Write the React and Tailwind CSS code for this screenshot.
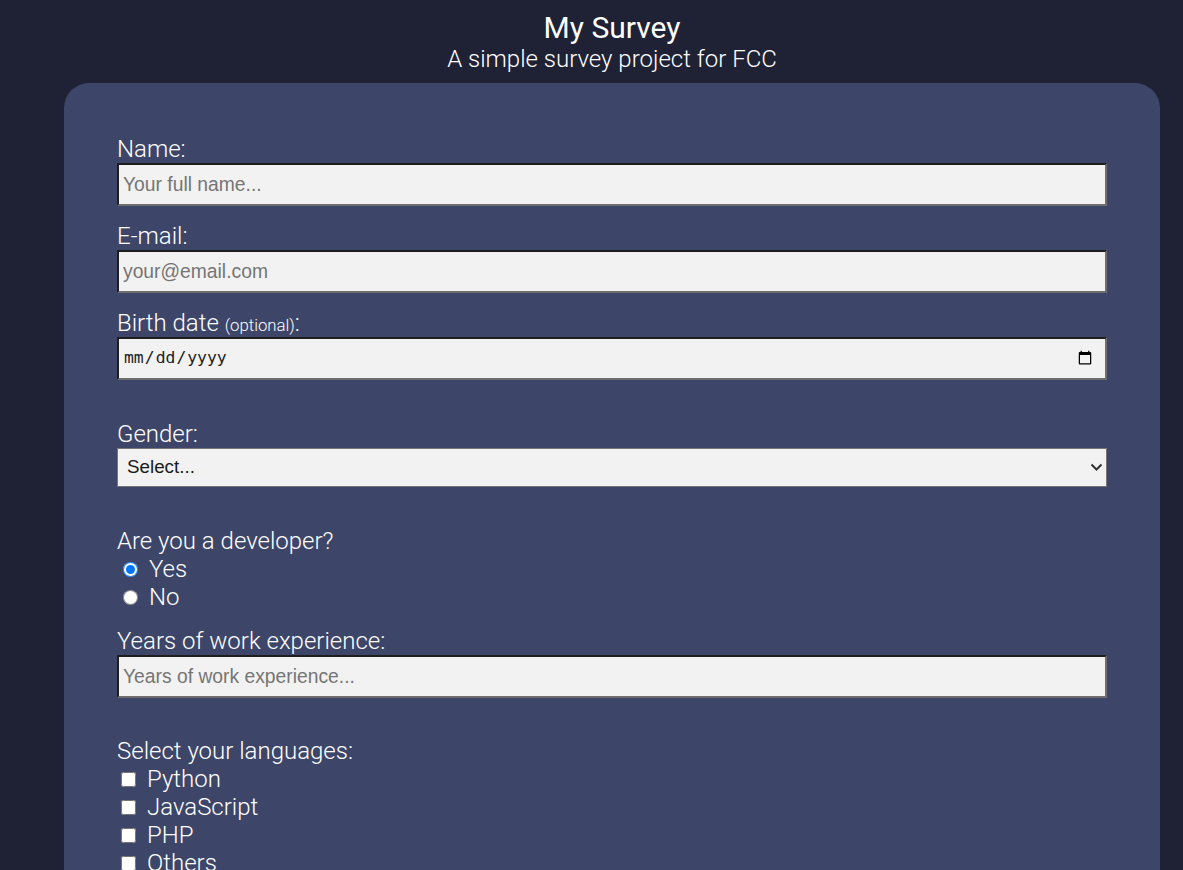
import React from "react";

const inputCls =
  "block w-full h-[43px] bg-[#f2f2f2] border-2 border-t-[#1e1e1e] border-l-[#1e1e1e] border-b-[#6e6e6e] border-r-[#6e6e6e] pl-[4px] pr-[8px] text-[19.3px] text-[#222] font-['Liberation_Sans',Arial,sans-serif] placeholder:text-[#757575] outline-none";

const labelCls = "block text-[24px] leading-[28px] h-[28px] font-light";

export default function App() {
  return (
    <div className="min-h-screen bg-[#1f2235] text-white font-['Roboto',sans-serif]">
      <div className="ml-[64px] w-[1096px]">
        <header className="text-center pt-[10px]">
          <h1 className="text-[30px] leading-[35px] font-normal">My Survey</h1>
          <p className="text-[24px] leading-[28px] font-light">A simple survey project for FCC</p>
        </header>
        <form className="mt-[10px] rounded-[25px] bg-[#3d4669] px-[53px] pt-[52px] pb-[60px]">
          <label className={labelCls} htmlFor="name">Name:</label>
          <input id="name" type="text" placeholder="Your full name..." className={inputCls} />

          <label className={labelCls + " mt-[16px]"} htmlFor="email">E-mail:</label>
          <input id="email" type="email" placeholder="your@email.com" className={inputCls} />

          <label className={labelCls + " mt-[16px]"} htmlFor="birth">
            Birth date <span className="text-[16.8px] leading-none">(optional)</span>:
          </label>
          <input
            id="birth"
            type="date"
            className="block w-full h-[43px] bg-[#f2f2f2] border-2 border-t-[#1e1e1e] border-l-[#1e1e1e] border-b-[#6e6e6e] border-r-[#6e6e6e] pl-[4px] pr-[10px] text-[16.4px] text-[#222] font-['DejaVu_Sans_Mono',monospace] outline-none"
          />

          <label className={labelCls + " mt-[40px]"} htmlFor="gender">Gender:</label>
          <div className="relative">
            <select
              id="gender"
              defaultValue=""
              className="block w-full h-[39px] appearance-none bg-[#f2f2f2] border border-[#767676] pl-[9px] text-[18.8px] text-[#1a1a1a] font-['Liberation_Sans',Arial,sans-serif] outline-none"
            >
              <option value="">Select...</option>
              <option value="m">Male</option>
              <option value="f">Female</option>
            </select>
            <svg
              className="absolute right-[4px] top-[15px] pointer-events-none"
              width="13"
              height="9"
              viewBox="0 0 13 9"
              fill="none"
            >
              <path d="M1.5 1.5 L6.5 6.5 L11.5 1.5" stroke="#333" strokeWidth="2" />
            </svg>
          </div>

          <p className={labelCls + " mt-[40px]"}>Are you a developer?</p>
          <label className="flex items-center h-[28px] text-[24px] font-light">
            <input type="radio" name="dev" defaultChecked className="w-[15px] h-[15px] m-0 ml-[6px] mr-[11px]" />
            Yes
          </label>
          <label className="flex items-center h-[28px] text-[24px] font-light">
            <input type="radio" name="dev" className="w-[15px] h-[15px] m-0 ml-[6px] mr-[11px]" />
            No
          </label>

          <label className={labelCls + " mt-[16px]"} htmlFor="years">Years of work experience:</label>
          <input id="years" type="text" placeholder="Years of work experience..." className={inputCls} />

          <p className={labelCls + " mt-[39px]"}>Select your languages:</p>
          {["Python", "JavaScript", "PHP", "Others"].map((l) => (
            <label key={l} className="flex items-center h-[28px] text-[24px] font-light">
              <input type="checkbox" className="w-[15px] h-[15px] m-0 ml-[4px] mr-[11px]" />
              {l}
            </label>
          ))}
        </form>
      </div>
    </div>
  );
}
